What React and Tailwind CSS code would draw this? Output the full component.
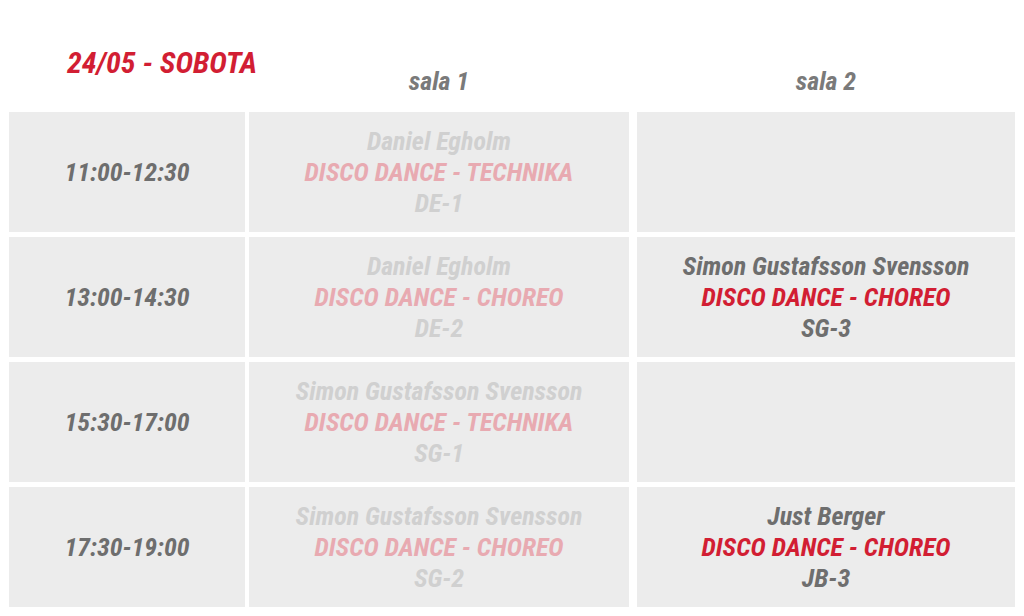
import React from "react";

const rows = [
  { time: "11:00-12:30", s1: { who: "Daniel Egholm", what: "DISCO DANCE - TECHNIKA", code: "DE-1", faded: true }, s2: null },
  { time: "13:00-14:30", s1: { who: "Daniel Egholm", what: "DISCO DANCE - CHOREO", code: "DE-2", faded: true }, s2: { who: "Simon Gustafsson Svensson", what: "DISCO DANCE - CHOREO", code: "SG-3" } },
  { time: "15:30-17:00", s1: { who: "Simon Gustafsson Svensson", what: "DISCO DANCE - TECHNIKA", code: "SG-1", faded: true }, s2: null },
  { time: "17:30-19:00", s1: { who: "Simon Gustafsson Svensson", what: "DISCO DANCE - CHOREO", code: "SG-2", faded: true }, s2: { who: "Just Berger", what: "DISCO DANCE - CHOREO", code: "JB-3" } },
];

function Slot({ item }) {
  if (!item) return <div className="h-full bg-[#ececec]" />;
  const gray = item.faded ? "text-[#d0d0d0]" : "text-[#6e6e6e]";
  const red = item.faded ? "text-[#e8aab1]" : "text-[#d21e33]";
  return (
    <div className="flex h-full flex-col items-center justify-center bg-[#ececec] leading-[31px]">
      <div className={gray}>{item.who}</div>
      <div className={red}>{item.what}</div>
      <div className={gray}>{item.code}</div>
    </div>
  );
}

export default function App() {
  return (
    <div className="h-[616px] w-[1024px] overflow-hidden bg-white text-[26px] font-bold italic [font-family:Roboto,sans-serif] [font-stretch:condensed]">
      <div className="flex h-[112px] pl-[9px]">
        <div className="w-[236px] whitespace-nowrap pl-[58px] pt-[40px] text-[30px] text-[#d21e33]">24/05 - SOBOTA</div>
        <div className="ml-[4px] w-[380px] pt-[62px] text-center text-[#7a7a7a]">sala 1</div>
        <div className="ml-[8px] w-[378px] pt-[62px] text-center text-[#7a7a7a]">sala 2</div>
      </div>
      <div className="flex flex-col gap-[5px] pl-[9px]">
        {rows.map((r) => (
          <div key={r.time} className="flex h-[120px]">
            <div className="flex w-[236px] items-center justify-center bg-[#ececec] text-[#6e6e6e]">{r.time}</div>
            <div className="ml-[4px] w-[380px]">
              <Slot item={r.s1} />
            </div>
            <div className="ml-[8px] w-[378px]">
              <Slot item={r.s2} />
            </div>
          </div>
        ))}
      </div>
    </div>
  );
}
